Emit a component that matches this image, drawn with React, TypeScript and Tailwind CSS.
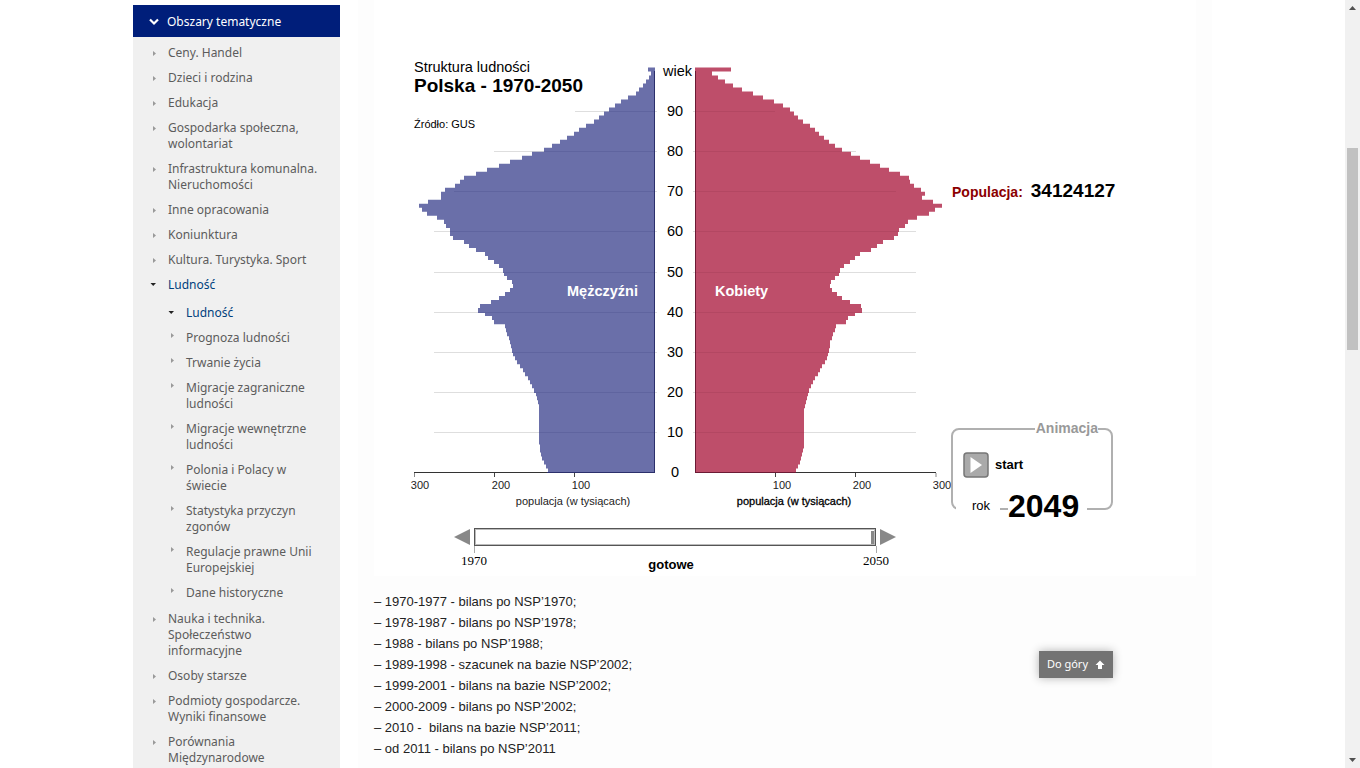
import React, { useState } from "react";

type Item = { label: string; children?: string[] };

const topics: Item[] = [
  { label: "Ceny. Handel" },
  { label: "Dzieci i rodzina" },
  { label: "Edukacja" },
  { label: "Gospodarka społeczna, wolontariat" },
  { label: "Infrastruktura komunalna. Nieruchomości" },
  { label: "Inne opracowania" },
  { label: "Koniunktura" },
  { label: "Kultura. Turystyka. Sport" },
  {
    label: "Ludność",
    children: [
      "Ludność",
      "Prognoza ludności",
      "Trwanie życia",
      "Migracje zagraniczne ludności",
      "Migracje wewnętrzne ludności",
      "Polonia i Polacy w świecie",
      "Statystyka przyczyn zgonów",
      "Regulacje prawne Unii Europejskiej",
      "Dane historyczne",
    ],
  },
  { label: "Nauka i technika. Społeczeństwo informacyjne" },
  { label: "Osoby starsze" },
  { label: "Podmioty gospodarcze. Wyniki finansowe" },
  { label: "Porównania Międzynarodowe" },
];

const notes = [
  "– 1970-1977 - bilans po NSP’1970;",
  "– 1978-1987 - bilans po NSP’1978;",
  "– 1988 - bilans po NSP’1988;",
  "– 1989-1998 - szacunek na bazie NSP’2002;",
  "– 1999-2001 - bilans na bazie NSP’2002;",
  "– 2000-2009 - bilans po NSP’2002;",
  "– 2010 -\u00a0 bilans na bazie NSP’2011;",
  "– od 2011 - bilans po NSP’2011",
];

// Bar lengths for each year of age, 0 to 100+.
const men = [
  107, 109, 111, 113, 114, 115, 115, 116, 116, 116, 116, 116, 116, 116, 116, 116, 116, 117, 118, 119,
  121, 123, 125, 127, 130, 132, 135, 138, 140, 142, 143, 144, 145, 146, 148, 149, 150, 161, 163, 170,
  177, 175, 164, 156, 150, 145, 142, 143, 148, 151, 152, 156, 161, 167, 170, 179, 186, 191, 202, 205,
  205, 209, 211, 218, 228, 233, 236, 227, 214, 214, 210, 200, 195, 191, 179, 168, 156, 145, 133, 123,
  111, 103, 95, 88, 81, 76, 69, 61, 56, 51, 46, 40, 34, 27, 19, 16, 12, 9, 6, 4, 7,
];
const women = [
  101, 103, 105, 106, 107, 108, 109, 109, 109, 109, 109, 109, 109, 109, 109, 109, 110, 111, 112, 113,
  114, 116, 118, 120, 123, 125, 127, 130, 132, 133, 134, 135, 135, 137, 138, 140, 141, 151, 153, 160,
  167, 166, 155, 147, 142, 137, 135, 136, 140, 144, 145, 149, 155, 160, 165, 176, 182, 188, 199, 203,
  204, 210, 213, 222, 234, 240, 247, 238, 227, 230, 226, 219, 215, 214, 205, 194, 185, 175, 165, 156,
  147, 140, 134, 129, 124, 120, 115, 108, 103, 99, 95, 88, 79, 68, 58, 47, 38, 30, 23, 17, 36,
];

const BASE = 472.5;
const STEP = 4.01;

function outline(values: number[], origin: number, direction: 1 | -1) {
  let d = `M${origin} ${BASE}`;
  values.forEach((v, age) => {
    d += `H${origin + direction * v}V${(BASE - STEP * (age + 1)).toFixed(2)}`;
  });
  return `${d}H${origin}Z`;
}

const gridReach: Record<number, number> = { 70: 201, 80: 161, 90: 80 };
const gridY = (age: number) => Math.floor(BASE - STEP * age) + 0.5;

function Pyramid() {
  const ages = [10, 20, 30, 40, 50, 60, 70, 80, 90];
  return (
    <svg
      width="572"
      height="516"
      viewBox="0 0 572 516"
      className="block overflow-visible font-['Liberation_Sans',Arial,sans-serif]"
      role="img"
      aria-label="Struktura ludności"
    >
      {ages.map((age) => {
        const y = gridY(age);
        const reach = gridReach[age] ?? 221;
        return (
          <g key={age} stroke="#dedede">
            <path d={`M${281 - reach} ${y}H283`} />
            <path d={`M319 ${y}H${321 + reach}`} />
          </g>
        );
      })}
      <path d={outline(men, 281, -1)} fill="#6a6fa9" />
      <path d={outline(women, 321, 1)} fill="#be4e6a" />
      {ages.map((age) => {
        const y = gridY(age);
        const reach = gridReach[age] ?? 221;
        return (
          <g key={age}>
            <path d={`M${281 - Math.min(reach, men[age])} ${y}H281`} stroke="#5f649f" />
            <path d={`M321 ${y}H${321 + Math.min(reach, women[age])}`} stroke="#b34762" />
          </g>
        );
      })}
      <path d="M280.5 71V472" stroke="#2b2f6b" />
      <path d="M321.5 71V472" stroke="#6b1a34" />
      <path d="M40 472.5H173M422 472.5H562" stroke="#333" />
      <path d="M173 472.5H281" stroke="#2b2f6b" />
      <path d="M321 472.5H422" stroke="#6b1a34" />
      <path d="M120.5 473V477M200.5 473V477M401.5 473V477M481.5 473V477" stroke="#444" />
      <path d="M40.5 473V477M562 473V477" stroke="#888" />

      <text x="40" y="72" fontSize="14.5">Struktura ludności</text>
      <text x="40" y="92" fontSize="19" fontWeight="bold">Polska - 1970-2050</text>
      <text x="40" y="128" fontSize="11">Źródło: GUS</text>
      <text x="289" y="76" fontSize="14.5">wiek</text>
      {[0, ...ages].map((age) => (
        <text key={age} x="301" y={Math.round(477 - STEP * age)} fontSize="14.5" textAnchor="middle">
          {age}
        </text>
      ))}
      <g fontSize="14.5" fontWeight="bold" fill="#fff">
        <text x="193" y="296">Mężczyźni</text>
        <text x="341" y="296">Kobiety</text>
      </g>
      <g fontSize="11" textAnchor="middle" fill="#222">
        <text x="46" y="489">300</text>
        <text x="127" y="489">200</text>
        <text x="207" y="489">100</text>
        <text x="408" y="489">100</text>
        <text x="488" y="489">200</text>
        <text x="568" y="489">300</text>
        <text x="199" y="505">populacja (w tysiącach)</text>
        <text x="420" y="505" fill="#000" stroke="#000" strokeWidth="0.3">populacja (w tysiącach)</text>
      </g>
    </svg>
  );
}

const FIRST_YEAR = 1970;
const LAST_YEAR = 2049;

function YearSlider({ year, onChange }: { year: number; onChange: (y: number) => void }) {
  return (
    <div className="ml-20 mt-3 w-[442px]">
      <div className="flex items-center justify-between">
        <button type="button" aria-label="Poprzedni rok" onClick={() => onChange(Math.max(FIRST_YEAR, year - 1))}>
          <svg width="16" height="16" viewBox="0 0 16 16" className="block">
            <path d="M0 8L16 0V16Z" fill="#888" />
          </svg>
        </button>
        <input
          type="range"
          aria-label="Rok"
          min={FIRST_YEAR}
          max={LAST_YEAR}
          value={year}
          onChange={(e) => onChange(Number(e.target.value))}
          className="m-0 h-[18px] w-[402px] appearance-none border border-[#555] bg-white px-px shadow-[inset_0_0_0_1px_#bbb] [&::-webkit-slider-thumb]:h-[13px] [&::-webkit-slider-thumb]:w-[3px] [&::-webkit-slider-thumb]:appearance-none [&::-webkit-slider-thumb]:bg-[#888]"
        />
        <button type="button" aria-label="Następny rok" onClick={() => onChange(Math.min(LAST_YEAR, year + 1))}>
          <svg width="16" height="16" viewBox="0 0 16 16" className="block">
            <path d="M16 8L0 0V16Z" fill="#888" />
          </svg>
        </button>
      </div>
      <div className="mx-[7px] flex justify-between font-['Liberation_Serif',serif] text-[13px] leading-4">
        <div className="flex flex-col items-center">
          <span className="h-[7px] w-px bg-[#aaa]" />
          <span>1970</span>
        </div>
        <span className="pr-2 pt-[11px] font-['Liberation_Sans',Arial,sans-serif] font-bold">gotowe</span>
        <div className="flex flex-col items-center">
          <span className="h-[7px] w-px bg-[#aaa]" />
          <span>2050</span>
        </div>
      </div>
    </div>
  );
}

function AnimationBox({ year }: { year: number }) {
  return (
    <fieldset className="relative mt-[225px] h-[82px] w-[162px] rounded-lg border-2 border-[#b0b0b0] px-[10px] pt-[22px]">
      <legend className="absolute -top-[10px] right-[13px] bg-white pl-px text-sm font-bold leading-4 text-[#999]">
        Animacja
      </legend>
      <button type="button" className="flex items-center gap-[6px] text-[13px] font-bold leading-5">
        <svg width="26" height="26" viewBox="0 0 26 26" aria-hidden="true">
          <rect x="1" y="1" width="24" height="24" rx="3" fill="#aaa" stroke="#777" strokeWidth="1.5" />
          <path d="M7.5 5V21L19 13Z" fill="#fff" />
        </svg>
        start
      </button>
      <span className="absolute -bottom-2 left-[3px] bg-white pl-4 pr-[10px] text-[13px] leading-5">rok</span>
      <strong className="absolute -bottom-4 left-[55px] bg-white pr-2 text-[32px] leading-9">{year}</strong>
    </fieldset>
  );
}

function Sidebar() {
  return (
    <nav className="w-[207px] shrink-0 bg-[#f0f0f0] pb-4 font-['Noto_Sans',sans-serif] text-xs leading-4 text-[#5c5c5c]">
      <button
        type="button"
        className="flex h-8 w-full items-center bg-[#001e7a] pl-4 pt-0.5 text-white"
      >
        <svg width="10" height="8" viewBox="0 0 10 8" className="mr-2" aria-hidden="true">
          <path d="M1 1.5L5 5.5L9 1.5" fill="none" stroke="#fff" strokeWidth="2.2" />
        </svg>
        Obszary tematyczne
      </button>
      <ul className="flex flex-col gap-[9px] pl-[35px] pr-4 pt-2">
        {topics.map((t) => (
          <li key={t.label}>
            <Entry label={t.label} state={t.children ? "open" : "closed"} />
            {t.children && (
              <ul className="mb-px mt-3 flex flex-col gap-[9px] pl-[18px]">
                {t.children.map((c, i) => (
                  <li key={c}>
                    <Entry label={c} state={i === 0 ? "open" : "nested"} />
                  </li>
                ))}
              </ul>
            )}
          </li>
        ))}
      </ul>
    </nav>
  );
}

function Entry({ label, state }: { label: string; state: "open" | "closed" | "nested" }) {
  const open = state === "open";
  return (
    <a href="#" className={open ? "-ml-[18px] flex text-[#003f7d]" : "-ml-[18px] flex"}>
      <svg
        width="8"
        height="7"
        viewBox="0 0 8 7"
        className={state === "nested" ? "mr-[10px] mt-0.5 shrink-0" : "mr-[10px] mt-[5px] shrink-0"}
        aria-hidden="true"
      >
        {open ? <path d="M0.5 1H6L3.2 4Z" fill="#222" /> : <path d="M3 1L6 3.5L3 6Z" fill="#999" />}
      </svg>
      <span>{label}</span>
    </a>
  );
}

function Scrollbar() {
  return (
    <div aria-hidden="true" className="flex w-[15px] shrink-0 flex-col items-center bg-[#f1f1f1]">
      <svg width="15" height="148" viewBox="0 0 15 148">
        <path d="M4 10H11L7.5 6Z" fill="#505050" />
      </svg>
      <div className="h-[202px] w-[11px] bg-[#c1c1c1]" />
      <svg width="15" height="15" viewBox="0 0 15 15" className="mt-auto">
        <path d="M4 5H11L7.5 9Z" fill="#505050" />
      </svg>
    </div>
  );
}

export default function App() {
  const [year, setYear] = useState(LAST_YEAR);
  return (
    <div className="flex h-screen overflow-hidden bg-white font-['Liberation_Sans',Arial,sans-serif] text-black">
      <div className="relative min-w-0 flex-1">
        <div className="mx-auto flex h-full max-w-[1079px] gap-[18px]">
          <div className="pt-[5px]">
            <Sidebar />
          </div>
          <main className="min-w-0 flex-1 bg-[#fdfdfd] px-4">
            <section className="flex h-[576px] bg-white">
              <div>
                <Pyramid />
                <YearSlider year={year} onChange={setYear} />
              </div>
              <div className="pl-[5px] pt-[180px]">
                <p className="flex items-baseline gap-2 pl-px font-bold">
                  <span className="text-sm leading-[22px] text-[#8b0000]">Populacja:</span>
                  <span className="text-[19px] leading-[22px]">34124127</span>
                </p>
                <AnimationBox year={year} />
              </div>
            </section>
            <ul className="mt-[15px] text-[13px] leading-[21px] text-[#222]">
              {notes.map((n) => (
                <li key={n}>{n}</li>
              ))}
            </ul>
          </main>
        </div>
        <button
          type="button"
          className="absolute bottom-[90px] right-[232px] flex h-[27px] items-center gap-[7px] bg-[#737373] px-2 font-['Noto_Sans',sans-serif] text-[11px] text-white shadow-[0_0_10px_rgba(0,0,0,0.3)]"
        >
          Do góry
          <svg width="10" height="10" viewBox="0 0 10 10" aria-hidden="true">
            <path d="M5 0.5L9.5 5H7V9H3V5H0.5Z" fill="#fff" />
          </svg>
        </button>
      </div>
      <Scrollbar />
    </div>
  );
}
